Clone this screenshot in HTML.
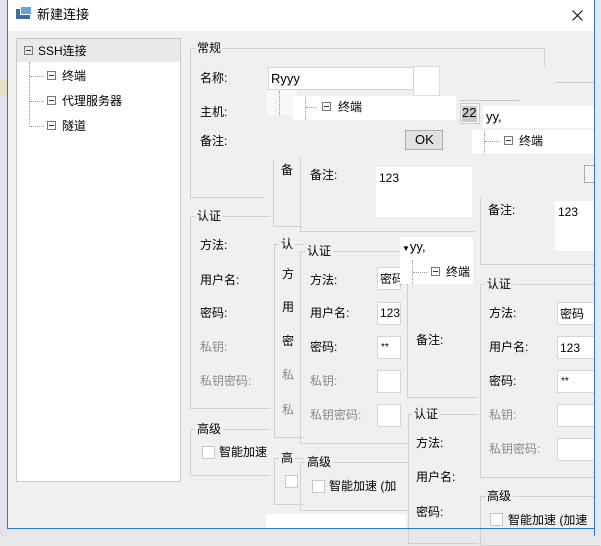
<!DOCTYPE html>
<html><head><meta charset="utf-8"><style>
body{margin:0;width:601px;height:536px;overflow:hidden;background:#e8e8e8;font-family:"Liberation Sans","Noto Sans CJK SC",sans-serif;font-size:12px;color:#000;position:relative}
div{position:absolute;box-sizing:border-box}
.t{white-space:nowrap;line-height:16px}
.g{color:#8a8a8a}
.fr{border:1px solid #d0d0d0}
.w{background:#fff}
.in{background:#fff;border:1px solid #d5d5d5}
.lb{background:#f0f0f0;padding:0 2px}
.cb{width:13px;height:13px;border:1px solid #c8c8c8;background:#fff}
.mb{width:9px;height:9px;border:1px solid #777;font-size:0}
.mb:after{content:"";position:absolute;left:1px;top:3px;width:5px;height:1px;background:#333}
.dv{border-left:1px dotted #999}
.dh{border-top:1px dotted #999}
</style></head><body>
<div style="left:0;top:0;width:8px;height:536px;background:#dfe4ea"></div>
<div style="left:0;top:80px;width:8px;height:16px;background:#eadfc8"></div>
<div style="left:7px;top:0;width:588px;height:529px;border:1px solid #2b79c9;background:#f0f0f0"></div>
<div style="left:8px;top:0;width:586px;height:31px;background:#fff"></div>
<div style="left:16px;top:9px;width:14px;height:10px;background:#3b6ea8"></div>
<div style="left:20px;top:6px;width:12px;height:9px;background:#6fa1d6;border:1px solid #fff"></div>
<div class="t" style="left:37px;top:7px;font-size:13px">新建连接</div>
<svg style="position:absolute;left:572px;top:10px" width="11" height="11"><path d="M0.5 0.5L10.5 10.5M10.5 0.5L0.5 10.5" stroke="#000" stroke-width="1"/></svg>

<!-- tree -->
<div class="w" style="left:16px;top:38px;width:165px;height:444px;border:1px solid #c8c8c8"></div>
<div style="left:17px;top:39px;width:163px;height:23px;background:#eaeaea"></div>
<div class="mb" style="left:24px;top:46px"></div>
<div class="t" style="left:38px;top:43px">SSH连接</div>
<div class="dv" style="left:29px;top:62px;height:64px"></div>
<div class="dh" style="left:30px;top:76px;width:14px"></div>
<div class="dh" style="left:30px;top:101px;width:14px"></div>
<div class="dh" style="left:30px;top:126px;width:14px"></div>
<div class="mb" style="left:47px;top:71px"></div><div class="t" style="left:62px;top:68px">终端</div>
<div class="mb" style="left:47px;top:96px"></div><div class="t" style="left:62px;top:93px">代理服务器</div>
<div class="mb" style="left:47px;top:121px"></div><div class="t" style="left:62px;top:118px">隧道</div>

<!-- 常规 -->
<div class="fr" style="left:190px;top:48px;width:355px;height:150px;border-right:none"></div>
<div style="left:544px;top:48px;width:1px;height:18px;background:#d0d0d0"></div>
<div style="left:265px;top:150px;width:290px;height:60px;background:#f0f0f0"></div>
<div class="t lb" style="left:195px;top:40px">常规</div>
<div class="t" style="left:200px;top:70px">名称:</div>
<div class="w" style="left:413px;top:66px;width:27px;height:30px;border:1px solid #ddd"></div>
<div class="in" style="left:268px;top:67px;width:146px;height:23px"></div>
<div class="t" style="left:271px;top:71px;font-size:13px">Ryyy</div>
<div class="t" style="left:200px;top:104px">主机:</div>
<div class="w" style="left:267px;top:90px;width:30px;height:25px;background:#f8f8f8"></div>
<div class="dv" style="left:279px;top:91px;height:24px"></div>
<div class="w" style="left:293px;top:96px;width:163px;height:24px"></div>
<div class="dv" style="left:305px;top:97px;height:23px"></div>
<div class="dh" style="left:306px;top:107px;width:10px"></div>
<div class="mb" style="left:322px;top:102px"></div><div class="t" style="left:338px;top:99px">终端</div>
<div class="t" style="left:200px;top:133px">备注:</div>
<div style="left:405px;top:130px;width:38px;height:20px;background:#e1e1e1;border:1px solid #adadad"></div>
<div class="t" style="left:415px;top:132px;font-size:13px">OK</div>
<div style="left:459px;top:100px;width:60px;height:1px;background:#c8c8c8"></div>
<div style="left:460px;top:103px;width:20px;height:21px;border:1px solid #ccc;background:#f6f6f6"></div>
<div style="left:462px;top:106px;width:15px;height:16px;background:#c9c9c9"></div>
<div class="t" style="left:462px;top:105px;font-size:13px">22</div>
<div class="w" style="left:483px;top:106px;width:111px;height:22px"></div>
<div class="t" style="left:486px;top:109px;font-size:13px">yy,</div>
<div class="w" style="left:472px;top:130px;width:122px;height:24px"></div>
<div class="dv" style="left:484px;top:131px;height:23px"></div>
<div class="dh" style="left:485px;top:141px;width:14px"></div>
<div class="mb" style="left:504px;top:136px"></div><div class="t" style="left:519px;top:133px">终端</div>
<div style="left:555px;top:82px;width:40px;height:1px;background:#c8c8c8"></div>
<div style="left:584px;top:165px;width:12px;height:18px;border:1px solid #aaa;background:#f4f4f4"></div>

<!-- middle frames top -->
<div class="fr" style="left:273px;top:160px;width:30px;height:67px;border-right:none;border-top:none"></div>
<div class="t" style="left:281px;top:162px">备</div>
<div class="fr" style="left:300px;top:158px;width:175px;height:74px;border-top:none;border-right:none"></div>
<div class="t" style="left:310px;top:167px">备注:</div>
<div class="w" style="left:376px;top:167px;width:96px;height:50px"></div>
<div class="t" style="left:379px;top:170px">123</div>
<div class="fr" style="left:480px;top:198px;width:120px;height:67px;border-top:none;border-right:none"></div>
<div class="t" style="left:488px;top:202px">备注:</div>
<div class="w" style="left:555px;top:201px;width:39px;height:50px"></div>
<div class="t" style="left:558px;top:204px">123</div>

<!-- 认证 left -->
<div class="fr" style="left:190px;top:216px;width:80px;height:193px;border-right:none"></div>
<div class="t lb" style="left:195px;top:208px">认证</div>
<div class="t" style="left:200px;top:237px">方法:</div>
<div class="t" style="left:200px;top:272px">用户名:</div>
<div class="t" style="left:200px;top:305px">密码:</div>
<div class="t g" style="left:200px;top:339px">私钥:</div>
<div class="t g" style="left:200px;top:373px">私钥密码:</div>
<div class="fr" style="left:274px;top:244px;width:30px;height:194px;border-right:none"></div>
<div class="t lb" style="left:279px;top:236px">认</div>
<div class="t" style="left:282px;top:266px">方</div>
<div class="t" style="left:282px;top:299px">用</div>
<div class="t" style="left:282px;top:333px">密</div>
<div class="t g" style="left:282px;top:367px">私</div>
<div class="t g" style="left:282px;top:402px">私</div>
<div class="fr" style="left:300px;top:251px;width:110px;height:193px;border-right:none"></div>
<div class="t lb" style="left:305px;top:243px">认证</div>
<div class="t" style="left:310px;top:272px">方法:</div>
<div class="in" style="left:377px;top:267px;width:24px;height:23px"></div><div class="t" style="left:380px;top:271px">密码</div>
<div class="t" style="left:310px;top:305px">用户名:</div>
<div class="in" style="left:377px;top:302px;width:24px;height:23px"></div><div class="t" style="left:380px;top:305px">123</div>
<div class="t" style="left:310px;top:339px">密码:</div>
<div class="in" style="left:377px;top:336px;width:24px;height:23px"></div><div class="t" style="left:381px;top:340px;font-size:10px">**</div>
<div class="t g" style="left:310px;top:373px">私钥:</div>
<div class="in" style="left:377px;top:370px;width:24px;height:23px"></div>
<div class="t g" style="left:310px;top:407px">私钥密码:</div>
<div class="in" style="left:377px;top:404px;width:24px;height:23px"></div>
<div class="w" style="left:400px;top:237px;width:73px;height:22px"></div>
<div class="t" style="left:402px;top:239px;font-size:13px"><span style="font-size:8px">▼</span>yy,</div>
<div class="w" style="left:400px;top:259px;width:73px;height:25px"></div>
<div class="dv" style="left:412px;top:260px;height:24px"></div>
<div class="dh" style="left:413px;top:272px;width:14px"></div>
<div class="mb" style="left:431px;top:267px"></div><div class="t" style="left:446px;top:264px">终端</div>
<div class="fr" style="left:407px;top:284px;width:70px;height:114px;border-top:none;border-right:none"></div>
<div class="t" style="left:416px;top:332px">备注:</div>
<div class="fr" style="left:408px;top:414px;width:70px;height:130px;border-right:none"></div>
<div class="t lb" style="left:412px;top:406px">认证</div>
<div class="t" style="left:416px;top:435px">方法:</div>
<div class="t" style="left:416px;top:469px">用户名:</div>
<div class="t" style="left:416px;top:504px">密码:</div>

<!-- 认证 right -->
<div class="fr" style="left:480px;top:284px;width:120px;height:194px;border-right:none"></div>
<div class="t lb" style="left:485px;top:276px">认证</div>
<div class="t" style="left:489px;top:305px">方法:</div>
<div class="in" style="left:557px;top:302px;width:40px;height:23px"></div><div class="t" style="left:560px;top:306px">密码</div>
<div class="t" style="left:489px;top:339px">用户名:</div>
<div class="in" style="left:557px;top:336px;width:40px;height:23px"></div><div class="t" style="left:560px;top:340px">123</div>
<div class="t" style="left:489px;top:373px">密码:</div>
<div class="in" style="left:557px;top:370px;width:40px;height:23px"></div><div class="t" style="left:561px;top:374px;font-size:10px">**</div>
<div class="t g" style="left:489px;top:407px">私钥:</div>
<div class="in" style="left:557px;top:404px;width:40px;height:23px"></div>
<div class="t g" style="left:489px;top:441px">私钥密码:</div>
<div class="in" style="left:557px;top:438px;width:40px;height:23px"></div>

<!-- 高级 -->
<div class="fr" style="left:190px;top:429px;width:80px;height:47px;border-right:none"></div>
<div class="t lb" style="left:195px;top:421px">高级</div>
<div class="cb" style="left:202px;top:446px"></div>
<div class="t" style="left:219px;top:444px">智能加速</div>
<div class="fr" style="left:274px;top:458px;width:30px;height:47px;border-right:none"></div>
<div class="t lb" style="left:279px;top:450px">高</div>
<div class="cb" style="left:285px;top:475px"></div>
<div class="fr" style="left:300px;top:462px;width:110px;height:49px;border-right:none"></div>
<div class="t lb" style="left:305px;top:454px">高级</div>
<div class="cb" style="left:312px;top:480px"></div>
<div class="t" style="left:329px;top:478px">智能加速 (加</div>
<div class="fr" style="left:480px;top:496px;width:120px;height:50px;border-right:none"></div>
<div class="t lb" style="left:485px;top:488px">高级</div>
<div class="cb" style="left:490px;top:513px"></div>
<div class="t" style="left:508px;top:512px">智能加速 (加速</div>
<div class="w" style="left:266px;top:514px;width:140px;height:14px"></div>
<div style="left:594px;top:0;width:7px;height:536px;background:#e8e8e8;border-left:1px solid #2b79c9"></div>
<div style="left:7px;top:528px;width:588px;height:1px;background:#2b79c9"></div>
</body></html>
